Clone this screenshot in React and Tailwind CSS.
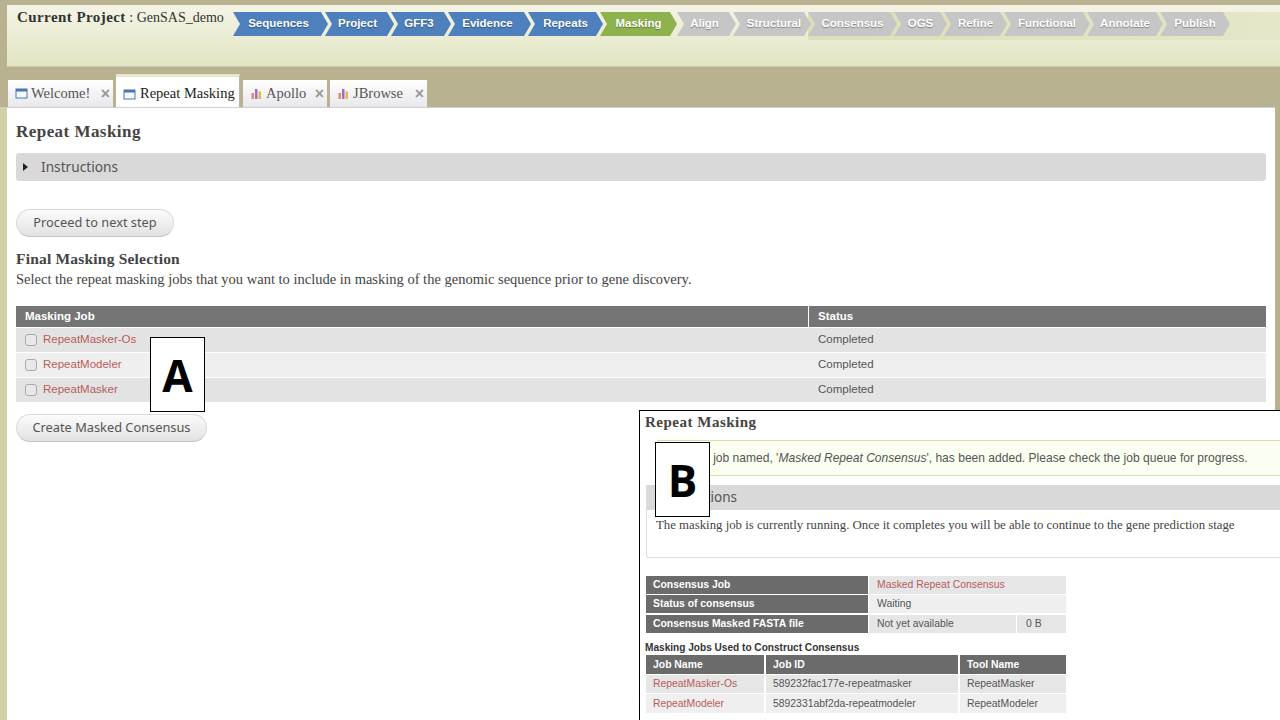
const chevron = 'h-[24px] flex items-center justify-center shrink-0 text-white text-[11.5px] font-bold [text-shadow:0_1px_1px_rgba(0,0,0,0.35)] [clip-path:polygon(0_0,calc(100%-7px)_0,100%_50%,calc(100%-7px)_100%,0_100%,7px_50%)]'

const doneSteps = [
  ['Sequences', 'w-[95px] pr-[4px]'],
  ['Project', 'w-[69px] pr-[4px]'],
  ['GFF3', 'w-[60px] pr-[4px]'],
  ['Evidence', 'w-[83px] pr-[4px]'],
  ['Repeats', 'w-[75px]'],
]

const todoFirst = [
  ['Align', 'w-[59px] pr-[4px]'],
  ['Structural', 'w-[78px] pl-[4px]'],
]

const todoRest = [
  ['Consensus', 'w-[89px]'],
  ['OGS', 'w-[53px]'],
  ['Refine', 'w-[63px]'],
  ['Functional', 'w-[86px]'],
  ['Annotate', 'w-[76px]'],
  ['Publish', 'w-[70px]'],
]

function WindowIcon() {
  return (
    <svg className="w-[13px] h-[13px] shrink-0" viewBox="0 0 13 13">
      <rect x="1" y="2" width="11" height="9" fill="#f4f7fb" stroke="#4a78ad" />
      <rect x="1" y="2" width="11" height="2.5" fill="#4a78ad" />
    </svg>
  )
}

function ChartIcon() {
  return (
    <svg className="w-[13px] h-[13px] shrink-0" viewBox="0 0 13 13">
      <rect x="1.5" y="6" width="2.5" height="6" fill="#e08a6a" />
      <rect x="5" y="2" width="2.5" height="10" fill="#a26cc0" />
      <rect x="8.5" y="4.5" width="2.5" height="7.5" fill="#e2b84e" />
    </svg>
  )
}

function Tab({ icon, label, width, active }) {
  return (
    <div className={`${width} flex items-center shrink-0 font-['Liberation_Serif',serif] text-[14.5px] pl-[7px] ${active ? 'h-[33px] bg-white text-[#222] border-t-[3px] border-t-[#e8e8cc] border-r border-r-[#b5b5b5] pt-[4px]' : 'h-[27px] bg-[linear-gradient(#ffffff,#e8e8ec)] text-[#555]'}`}>
      {icon}
      <span className={active ? 'ml-[4px]' : 'ml-[3px]'}>{label}</span>
      {!active && <span className="ml-auto mr-[3px] text-[16px] font-bold leading-none text-[#999] font-['Liberation_Sans',sans-serif]">×</span>}
    </div>
  )
}

function PillButton({ width, children }) {
  return (
    <button className={`${width} h-[28px] rounded-full border border-[#dadada] border-b-[#c4c4c4] bg-[linear-gradient(#fbfbfb,#e2e2e2)] font-['Noto_Sans',sans-serif] text-[12.8px] text-[#555] block`}>
      {children}
    </button>
  )
}

function Row({ name, bg, top }) {
  return (
    <div className={`flex h-[24px] ${top} items-center text-[11.5px] text-[#555] ${bg}`}>
      <div className="w-[793px] flex items-center pl-[9px]">
        <span className="w-[12px] h-[12px] rounded-[3px] border border-[#aaa] bg-[#e8e8e8]" />
        <span className="ml-[6px] text-[#b85c5c]">{name}</span>
      </div>
      <div className="pl-[9px]">Completed</div>
    </div>
  )
}

function Label({ letter, className }) {
  return (
    <div className={`absolute w-[55px] h-[75px] bg-white border border-black flex items-center justify-center font-['Open_Sans',sans-serif] font-bold text-[44px] text-black ${className}`}>
      {letter}
    </div>
  )
}

function SummaryRow({ label, top, children }) {
  return (
    <div className={`flex h-[18px] ${top}`}>
      <div className="w-[222px] bg-[#6b6b6b] text-white font-bold pl-[7px] flex items-center">{label}</div>
      {children}
    </div>
  )
}

function JobRow({ name, id, tool, bg, h }) {
  return (
    <div className={`flex ${h} mt-[1px] gap-[2px] text-[#555]`}>
      <div className={`w-[118px] ${bg} pl-[7px] flex items-center text-[#b85c5c]`}>{name}</div>
      <div className={`w-[192px] ${bg} pl-[7px] flex items-center`}>{id}</div>
      <div className={`flex-1 ${bg} pl-[7px] flex items-center`}>{tool}</div>
    </div>
  )
}

function JobPanel() {
  return (
    <div className="absolute left-[639px] top-[410px] w-[641px] h-[310px] bg-white border-t border-l border-black pl-[6px] font-['Liberation_Sans',sans-serif] text-[10.4px]">
      <div className="h-[22px] flex items-center font-['Liberation_Serif',serif] font-bold text-[15px] tracking-[0.5px] text-[#444] -ml-[1px]">Repeat Masking</div>
      <div className="mt-[7px] ml-[11px] h-[36px] bg-[#fafff2] border border-[#cbe7a6] border-r-0 flex items-center pl-[19px] text-[12.05px] text-[#555] whitespace-nowrap">
        A new job named, '<i>Masked Repeat Consensus</i>', has been added. Please check the job queue for progress.
      </div>
      <div className="mt-[9px] h-[73px] border border-[#ddd] border-r-0 border-t-0 rounded-bl-[3px]">
        <div className="h-[25px] bg-[#d9d9d9] flex items-center pl-[14px] font-['Noto_Sans',sans-serif] text-[13.5px] text-[#555]">Instructions</div>
        <div className="mt-[6px] ml-[9px] font-['Liberation_Serif',serif] text-[12.8px] leading-[19px] text-[#444] whitespace-nowrap">
          The masking job is currently running. Once it completes you will be able to continue to the gene prediction stage
        </div>
      </div>
      <div className="w-[420px] mt-[18px]">
        <SummaryRow label="Consensus Job">
          <div className="flex-1 ml-[1px] bg-[#e6e6e6] pl-[8px] flex items-center text-[#b85c5c]">Masked Repeat Consensus</div>
        </SummaryRow>
        <SummaryRow label="Status of consensus" top="mt-[1px]">
          <div className="flex-1 ml-[1px] bg-[#efefef] pl-[8px] flex items-center text-[#555]">Waiting</div>
        </SummaryRow>
        <SummaryRow label="Consensus Masked FASTA file" top="mt-[2px]">
          <div className="w-[147px] ml-[1px] bg-[#e6e6e6] pl-[8px] flex items-center text-[#555]">Not yet available</div>
          <div className="flex-1 ml-[1px] bg-[#e6e6e6] pl-[9px] flex items-center text-[#555]">0 B</div>
        </SummaryRow>
        <div className="-ml-[1px] mt-[8px] h-[14px] font-bold text-[10.1px] text-[#333] flex items-center whitespace-nowrap">Masking Jobs Used to Construct Consensus</div>
        <div className="flex h-[19px] gap-[2px] text-white font-bold">
          <div className="w-[118px] bg-[#6b6b6b] pl-[7px] flex items-center">Job Name</div>
          <div className="w-[192px] bg-[#6b6b6b] pl-[7px] flex items-center">Job ID</div>
          <div className="flex-1 bg-[#6b6b6b] pl-[7px] flex items-center">Tool Name</div>
        </div>
        <JobRow name="RepeatMasker-Os" id="589232fac177e-repeatmasker" tool="RepeatMasker" bg="bg-[#e6e6e6]" h="h-[18px]" />
        <JobRow name="RepeatModeler" id="5892331abf2da-repeatmodeler" tool="RepeatModeler" bg="bg-[#efefef]" h="h-[19px]" />
      </div>
    </div>
  )
}

export default function App() {
  return (
    <div className="relative w-[1280px] h-[720px] overflow-hidden bg-[#b8b290] pt-[5px] pl-[7px] pr-[5px] font-['Liberation_Sans',sans-serif]">
      <header className="h-[62px] -mr-[5px] bg-[linear-gradient(#f4f4e6,#e2e5c2)] border-b border-[#c9c9b4] flex items-start pt-[7px]">
        <div className="w-[226px] shrink-0 pl-[10px] -mt-[7px] font-['Liberation_Serif',serif] text-[#333] whitespace-nowrap">
          <span className="font-bold text-[15px] tracking-[0.43px]">Current Project</span>
          <span className="text-[14px]"> : GenSAS_demo</span>
        </div>
        <div className="flex">
          {doneSteps.map(([name, w]) => (
            <div key={name} className={`${chevron} ${w} -mr-[3px] bg-[#4d80bd]`}>{name}</div>
          ))}
          <div className={`${chevron} w-[77px] bg-[#8eb24d]`}>Masking</div>
          {todoFirst.map(([name, w]) => (
            <div key={name} className={`${chevron} ${w} -mr-[3px] bg-[#c6c6c6]`}>{name}</div>
          ))}
        </div>
        <div className="flex flex-1 h-[28px] bg-[linear-gradient(90deg,#dce0b8,#e4e7c8)]">
          {todoRest.map(([name, w]) => (
            <div key={name} className={`${chevron} ${w} -mr-[3px] bg-[#c6c6c6]`}>{name}</div>
          ))}
        </div>
      </header>
      <div className="flex items-end gap-[3px] h-[40px] pl-[1px]">
        <Tab icon={<WindowIcon />} label="Welcome!" width="w-[105px]" />
        <Tab icon={<WindowIcon />} label="Repeat Masking" width="w-[124px]" active />
        <Tab icon={<ChartIcon />} label="Apollo" width="w-[84px]" />
        <Tab icon={<ChartIcon />} label="JBrowse" width="w-[97px]" />
      </div>
      <main className="h-[613px] -ml-[7px] bg-white pl-[9px] pr-[9px] border-t border-t-[#d0d0d0] border-l-[7px] border-l-[#cfd1a6] box-border">
        <h1 className="mt-[14px] font-['Liberation_Serif',serif] font-bold text-[17px] tracking-[0.45px] text-[#444] leading-[20px]">Repeat Masking</h1>
        <div className="mt-[11px] h-[28px] rounded-[3px] bg-[#d9d9d9] flex items-center pl-[7px] font-['Noto_Sans',sans-serif] text-[13.7px] text-[#555]">
          <span className="w-0 h-0 border-y-[4px] border-y-transparent border-l-[5px] border-l-[#222] mr-[13px]" />
          Instructions
        </div>
        <div className="mt-[28px]"><PillButton width="w-[158px]">Proceed to next step</PillButton></div>
        <h2 className="mt-[13px] font-['Liberation_Serif',serif] font-bold text-[15.5px] tracking-[0.2px] text-[#444] leading-[18px]">Final Masking Selection</h2>
        <p className="mt-[2px] font-['Liberation_Serif',serif] text-[14.5px] text-[#444] leading-[18px] whitespace-nowrap">Select the repeat masking jobs that you want to include in masking of the genomic sequence prior to gene discovery.</p>
        <div className="mt-[18px]">
          <div className="flex h-[21px] items-center bg-[#757575] text-white text-[11.5px] font-bold">
            <div className="w-[793px] h-full flex items-center pl-[9px] border-r border-white">Masking Job</div>
            <div className="pl-[9px]">Status</div>
          </div>
          <Row name="RepeatMasker-Os" bg="bg-[#e3e3e3]" top="mt-[1px]" />
          <Row name="RepeatModeler" bg="bg-[#efefef]" top="mt-[1px]" />
          <Row name="RepeatMasker" bg="bg-[#e3e3e3]" top="mt-[1px]" />
        </div>
        <div className="mt-[12px]"><PillButton width="w-[191px]">Create Masked Consensus</PillButton></div>
      </main>
      <Label letter="A" className="left-[150px] top-[337px]" />
      <JobPanel />
      <Label letter="B" className="left-[655px] top-[442px]" />
    </div>
  )
}
